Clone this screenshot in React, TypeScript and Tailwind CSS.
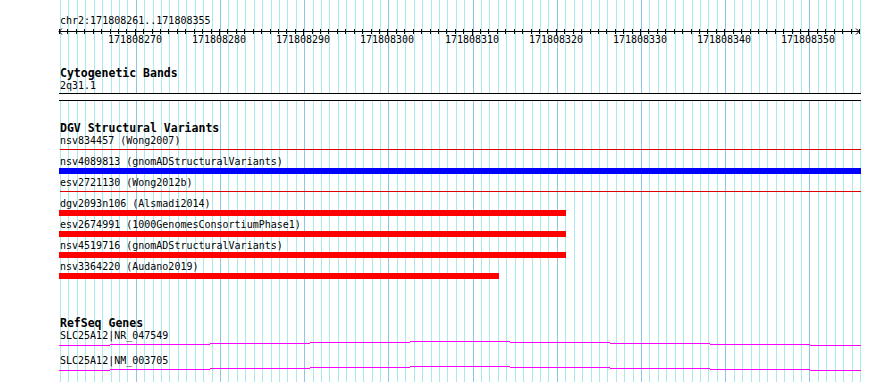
const START = 171808261;
const END = 171808355;
const LEFT = 60;
const WIDTH = 800;
const BASES = END - START + 1;
const px = (i: number) => Math.round(LEFT + (i * WIDTH) / BASES) + 0.5;

const mono = "font-['DejaVu_Sans_Mono',monospace]";

function Grid() {
  const lines = [];
  for (let i = 0; i <= BASES; i++) {
    const major = (START + i) % 10 === 0;
    lines.push(
      <line
        key={i}
        x1={px(i)}
        x2={px(i)}
        y1={0}
        y2={382}
        stroke={major ? "#8cc6e6" : "#aaeaee"}
        strokeWidth={1}
      />
    );
  }
  return (
    <svg className="absolute inset-0" width={890} height={382} shapeRendering="crispEdges">
      {lines}
    </svg>
  );
}

function Ruler() {
  const ticks = [];
  const labels = [];
  for (let i = 0; i <= BASES; i++) {
    const major = (START + i) % 10 === 0;
    const x = px(i) - LEFT + 1;
    ticks.push(
      <line key={i} x1={x} x2={x} y1={2} y2={major ? 9 : 7} stroke="#000" />
    );
    if (major) {
      labels.push(
        <span
          key={i}
          className="absolute top-[5px] w-[60px] -ml-[30px] text-center"
          style={{ left: x - 0.5 }}
        >
          {START + i}
        </span>
      );
    }
  }
  return (
    <div className="relative h-[22px] w-[802px] -ml-px">
      <svg className="absolute inset-0" width={802} height={12} shapeRendering="crispEdges">
        <line x1={1} x2={801} y1={4.5} y2={4.5} stroke="#000" />
        {ticks}
        <path d="M4 1.5 L1 4.5 L4 7.5 M798 1.5 L801 4.5 L798 7.5" fill="none" stroke="#000" shapeRendering="auto" />
      </svg>
      {labels}
    </div>
  );
}

function TrackTitle({ children, className = "" }: { children: string; className?: string }) {
  return <div className={`text-[11.5px] font-bold leading-[13px] ${className}`}>{children}</div>;
}

type Variant = { name: string; kind: "line" | "bar"; color: string; end?: number };

const variants: Variant[] = [
  { name: "nsv834457 (Wong2007)", kind: "line", color: "#dd0000" },
  { name: "nsv4089813 (gnomADStructuralVariants)", kind: "bar", color: "#0000ff" },
  { name: "esv2721130 (Wong2012b)", kind: "line", color: "#dd0000" },
  { name: "dgv2093n106 (Alsmadi2014)", kind: "bar", color: "#ff0000", end: 507 },
  { name: "esv2674991 (1000GenomesConsortiumPhase1)", kind: "bar", color: "#ff0000", end: 507 },
  { name: "nsv4519716 (gnomADStructuralVariants)", kind: "bar", color: "#ff0000", end: 507 },
  { name: "nsv3364220 (Audano2019)", kind: "bar", color: "#ff0000", end: 440 },
];

function VariantRow({ v }: { v: Variant }) {
  return (
    <div className="h-[21px]">
      <div className="h-[12px] leading-[12px] pl-px">{v.name}</div>
      {v.kind === "bar" ? (
        <div className="h-[6px]" style={{ background: v.color, width: v.end ?? 802 }} />
      ) : (
        <div className="mt-[2px] h-px w-[801px] ml-px" style={{ background: v.color }} />
      )}
    </div>
  );
}

const steps = [
  [0, 51, 4],
  [51, 151, 3],
  [151, 251, 2],
  [251, 351, 1],
  [351, 451, 0],
  [451, 551, 1],
  [551, 651, 2],
  [651, 751, 3],
  [751, 802, 4],
];

function GeneRow({ name }: { name: string }) {
  return (
    <div className="h-[25px]">
      <div className="h-[11px] leading-[12px] pl-px">{name}</div>
      <svg width={802} height={8} shapeRendering="crispEdges" className="block">
        {steps.map(([a, b, y], i) => (
          <line key={i} x1={a} x2={b} y1={y + 0.5} y2={y + 0.5} stroke="#ff00ff" />
        ))}
      </svg>
    </div>
  );
}

export default function App() {
  return (
    <div className={`relative w-[890px] h-[382px] overflow-hidden bg-white text-black text-[10px] ${mono}`}>
      <Grid />
      <div className="relative flex flex-col pl-[59px] pt-[15px]">
        <div className="h-[12px] leading-[12px] pl-px">chr2:171808261..171808355</div>
        <Ruler />
        <TrackTitle className="mt-[18px] pl-px">Cytogenetic Bands</TrackTitle>
        <div className="h-[12px] leading-[12px] pl-px">2q31.1</div>
        <div className="mt-px h-[8px] w-[802px] border-y border-black bg-white" />
        <TrackTitle className="mt-[21px] pl-px">DGV Structural Variants</TrackTitle>
        <div>
          {variants.map((v) => (
            <VariantRow key={v.name} v={v} />
          ))}
        </div>
        <TrackTitle className="mt-[35px] pl-px">RefSeq Genes</TrackTitle>
        <div>
          <GeneRow name="SLC25A12|NR_047549" />
          <GeneRow name="SLC25A12|NM_003705" />
        </div>
      </div>
    </div>
  );
}
